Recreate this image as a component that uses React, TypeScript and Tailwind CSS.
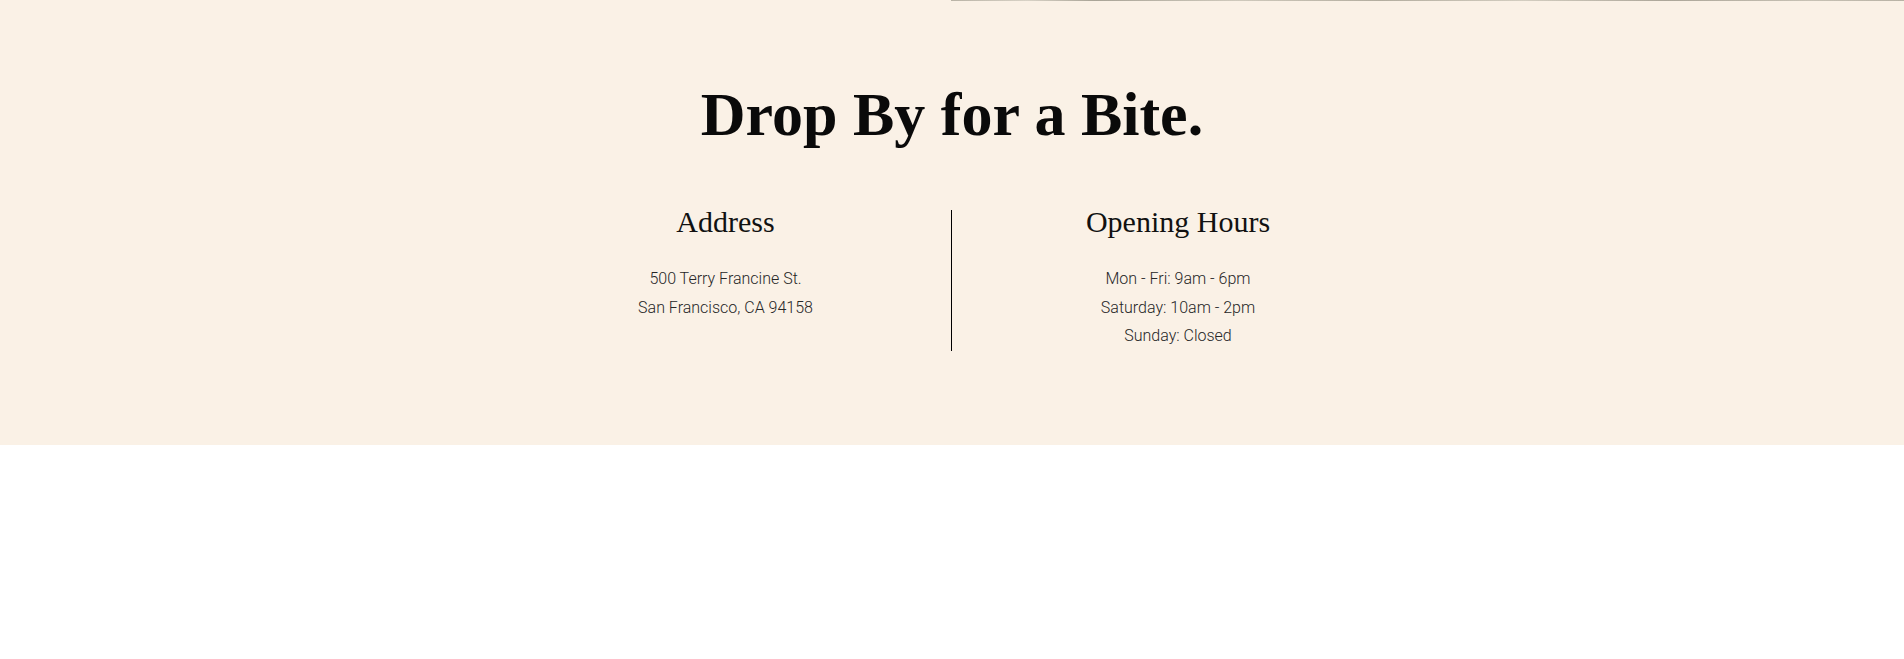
const serif = '[font-family:"Liberation_Serif","Times_New_Roman",serif]'

const hours = ['Mon - Fri: 9am - 6pm', 'Saturday: 10am - 2pm', 'Sunday: Closed']

function InfoColumn({ title, lines, width }: { title: string; lines: string[]; width: string }) {
  return (
    <div className={`flex ${width} flex-col items-center text-center`}>
      <h3 className={`${serif} text-[30px] leading-none text-[#111]`}>{title}</h3>
      <div className="mt-[28px] [font-family:Roboto,sans-serif] text-[16px] font-light leading-[28.5px] text-[#262626]">
        {lines.map((l) => (
          <p key={l}>{l}</p>
        ))}
      </div>
    </div>
  )
}

export default function App() {
  return (
    <div className="min-h-[659px] w-full bg-white">
      <section className="flex h-[445px] flex-col bg-[#faf1e6]">
        {/* bottom edge of the image above */}
        <div className="flex h-px w-full">
          <div className="w-[951px]" />
          <div className="flex-1 bg-[linear-gradient(90deg,#b9b3a6,#d8d2c6_8%,#a9a497_15%,#cfc9bc_30%,#b3ad9f_45%,#d3cdc0_60%,#aca699_75%,#c7c1b4_90%,#b8b2a5)]" />
        </div>
        <h2
          className={`${serif} mt-[82px] text-center text-[62px] font-bold leading-none text-[#0a0a0a]`}
        >
          Drop By for a Bite.
        </h2>
        <div className="mt-[62px] flex justify-center">
          <InfoColumn
            title="Address"
            width="w-[451px]"
            lines={['500 Terry Francine St.', 'San Francisco, CA 94158']}
          />
          <div className="mt-[3px] h-[141px] w-px bg-black" />
          <InfoColumn title="Opening Hours" width="w-[452px]" lines={hours} />
        </div>
      </section>
    </div>
  )
}
